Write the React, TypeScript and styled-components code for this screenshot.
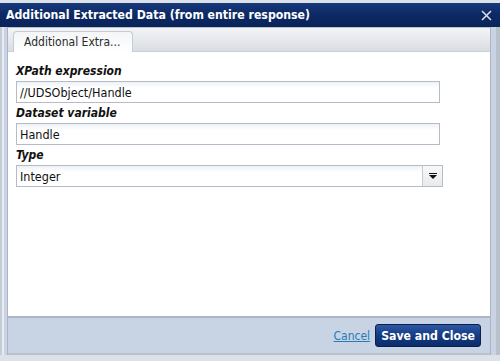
import React from 'react';
import styled, { createGlobalStyle } from 'styled-components';

const GlobalStyle = createGlobalStyle`
  html, body {
    margin: 0;
    padding: 0;
    background: #dde1e8;
  }
  body {
    font-family: 'DejaVu Sans Condensed', 'DejaVu Sans', Verdana, sans-serif;
  }
`;

const Window = styled.div`
  width: 500px;
  height: 361px;
  display: flex;
  flex-direction: column;
  box-sizing: border-box;
  padding-top: 3px;
  background: #dde1e8;
`;

const TitleBar = styled.div`
  height: 24px;
  flex: none;
  display: flex;
  align-items: center;
  justify-content: space-between;
  padding: 0 8px 0 6px;
  background: linear-gradient(to bottom, #173a7c 0%, #0d2a66 45%, #0a2459 100%);
  color: #fff;
  font-weight: bold;
  font-size: 12.2px;
`;

const CloseX = styled.svg`
  width: 11px;
  height: 11px;
`;

const Body = styled.div`
  flex: 1;
  display: flex;
  flex-direction: column;
  margin: 0 0 6px 0;
  padding: 0 5px 0 7px;
  background: linear-gradient(to right, #c4ccd8 0, #c4ccd8 2px, #e8ebf0 2px, #e8ebf0 4px, #c9d3e1 4px);
  border-right: 4px solid #b8c0cc;
`;

const Frame = styled.div`
  flex: 1;
  display: flex;
  flex-direction: column;
  border-left: 1px solid #a9b5c8;
  border-right: 1px solid #a9b5c8;
  background: #c8d4e3;
`;

const TabStrip = styled.div`
  height: 25px;
  flex: none;
  display: flex;
  align-items: flex-end;
  padding-left: 5px;
  box-sizing: border-box;
  border-top: 1px solid #b7c0cc;
  background: linear-gradient(to bottom, #f3f4f6, #d9dde3);
  border-bottom: 1px solid #c9d0da;
`;

const Tab = styled.div`
  height: 21px;
  box-sizing: border-box;
  padding: 0 12px 0 10px;
  display: flex;
  align-items: center;
  background: linear-gradient(to bottom, #f4f5f7, #ffffff);
  border: 1px solid #c5ccd6;
  border-bottom: none;
  border-radius: 4px 4px 0 0;
  color: #2b2b2b;
  font-size: 12px;
  margin-bottom: -1px;
`;

const Panel = styled.div`
  flex: none;
  height: 266px;
  background: #fff;
  display: flex;
  flex-direction: column;
  padding: 12px 0 0 8px;
  box-sizing: border-box;
  border-bottom: 2px solid #aab6c8;
`;

const Label = styled.div`
  font-size: 12px;
  font-weight: bold;
  font-style: italic;
  color: #111;
  height: 17px;
  line-height: 14px;
`;

const Input = styled.div`
  width: 424px;
  height: 22px;
  box-sizing: border-box;
  border: 1px solid #b6bbc9;
  background: linear-gradient(to bottom, #eef1f4 0, #fff 6px);
  font-size: 12.5px;
  color: #111;
  padding-left: 3px;
  display: flex;
  align-items: center;
  margin-bottom: 3px;
`;

const Select = styled(Input)`
  width: 427px;
  padding-right: 0;
  justify-content: space-between;
`;

const SelectButton = styled.div`
  width: 20px;
  height: 20px;
  box-sizing: border-box;
  border-left: 1px solid #c7cbd3;
  background: linear-gradient(to bottom, #f7f8f9, #e8ebee);
  display: flex;
  align-items: center;
  justify-content: center;
`;

const Footer = styled.div`
  flex: 1;
  display: flex;
  justify-content: flex-end;
  align-items: center;
  gap: 5px;
  padding-right: 9px;
  border-bottom: 2px solid #b9c1cd;
`;

const CancelLink = styled.a`
  font-size: 12px;
  color: #2a7ab8;
  text-decoration: underline;
  cursor: pointer;
`;

const SaveButton = styled.button`
  height: 23px;
  padding: 0 5px;
  border: 1px solid #0a2050;
  border-radius: 3px;
  background: linear-gradient(to bottom, #2d58a3 0%, #143b83 50%, #0c2c6b 100%);
  color: #fff;
  font-family: inherit;
  font-weight: bold;
  font-size: 12.2px;
`;

export default function App() {
  return (
    <>
      <GlobalStyle />
      <Window>
        <TitleBar>
          <span>Additional Extracted Data (from entire response)</span>
          <CloseX viewBox="0 0 11 11">
            <path d="M1 1 L10 10 M10 1 L1 10" stroke="#d8dde8" strokeWidth="1.6" />
          </CloseX>
        </TitleBar>
        <Body>
          <Frame>
            <TabStrip>
              <Tab>Additional Extra...</Tab>
            </TabStrip>
            <Panel>
              <Label>XPath expression</Label>
              <Input>//UDSObject/Handle</Input>
              <Label>Dataset variable</Label>
              <Input>Handle</Input>
              <Label>Type</Label>
              <Select>
                <span>Integer</span>
                <SelectButton>
                  <svg width="8" height="6" viewBox="0 0 8 6">
                    <path d="M0 0 H8 V1 H0 Z M0 2 H8 L4 6 Z" fill="#111" />
                  </svg>
                </SelectButton>
              </Select>
            </Panel>
            <Footer>
              <CancelLink>Cancel</CancelLink>
              <SaveButton>Save and Close</SaveButton>
            </Footer>
          </Frame>
        </Body>
      </Window>
    </>
  );
}
